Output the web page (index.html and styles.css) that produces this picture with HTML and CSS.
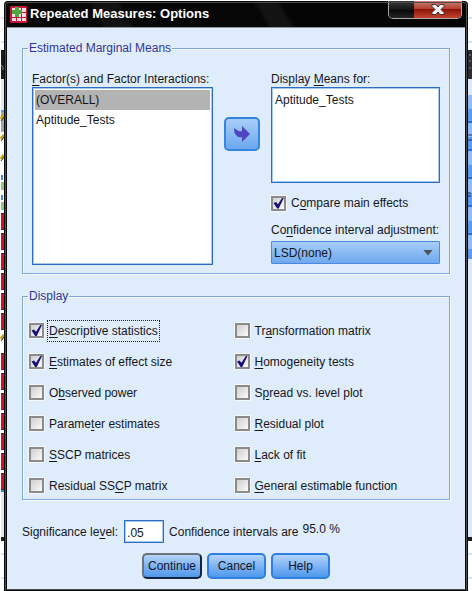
FILE: index.html
```
<!DOCTYPE html>
<html lang="en">
<head>
    <meta charset="UTF-8">
    <meta name="viewport" content="width=device-width, initial-scale=1.0">
    <title>Repeated Measures: Options</title>
    <link rel="stylesheet" href="styles.css">
</head>
<body>
    <!-- data editor showing behind the dialog, left edge -->
    <svg class="backdrop" width="4" height="591" aria-hidden="true">
        <defs>
            <pattern id="red-cells" width="4" height="20" patternUnits="userSpaceOnUse" y="12">
                <rect width="4" height="20" fill="#fff"/>
                <rect x="1" y="1" width="3" height="17" fill="#d0112b"/>
                <path d="M1 1.500h3M1 17.500h3" stroke="#4a2a30"/>
            </pattern>
        </defs>
        <rect width="4" height="591" fill="#fff"/>
        <path d="M1 18h3M1 42h3" stroke="#a9c8ea"/>
        <rect x="1" y="50" width="3" height="29" fill="#1c1c1c"/>
        <path d="M1 65l2 2v3" stroke="#888" fill="none"/>
        <rect x="1" y="79" width="3" height="31" fill="#dce9f8"/>
        <rect x="1" y="110" width="3" height="2" fill="#5b9be8"/>
        <rect x="1" y="112" width="3" height="20" fill="#a5a5a5"/>
        <path d="M1 119l3-4M1 139l3-4M1 159l3-4M1 339l3-4" stroke="#c9a400" stroke-width="3"/>
        <path d="M1 121l3-4M1 141l3-4M1 161l3-4M1 341l3-4" stroke="#3a3210"/>
        <rect x="1" y="175" width="2" height="5" fill="#4a86d8"/>
        <rect x="1" y="195" width="2" height="5" fill="#4a86d8"/>
        <rect x="1" y="182" width="3" height="8" fill="#8fca78"/>
        <rect x="1" y="202" width="3" height="8" fill="#8fca78"/>
        <rect y="212" width="4" height="120" fill="url(#red-cells)"/>
        <rect y="352" width="4" height="138" fill="url(#red-cells)"/>
        <rect x="1" y="490" width="3" height="2" fill="#3d7fe0"/>
        <rect x="1" y="492" width="3" height="45" fill="#dce9f8"/>
        <rect x="1" y="537" width="3" height="4" fill="#1c1c1c"/>
        <path d="M1 554h3M1 578h3" stroke="#a9c8ea"/>
    </svg>

    <main class="dialog">
        <header class="titlebar">
            <svg class="app-icon" width="17" height="17" viewBox="0 0 17 17" aria-hidden="true">
                <rect width="17" height="17" rx="1" fill="#c8143c"/>
                <path d="M2 2h4v4H2zM7 2h4v4H7zM12 2h4v4h-4zM2 7h4v4H2zM7 7h4v4H7zM12 7h4v4h-4zM2 12h4v3H2zM7 12h4v3H7zM12 12h4v3h-4z" fill="#f9dce0"/>
                <path d="M5 1h4v3h3v4H9v3H5V8H2V4h3z" fill="#4fa83d"/>
            </svg>
            <h1 class="title">Repeated Measures: Options</h1>
            <div class="window-buttons">
                <span class="window-blank"></span>
                <button class="close" type="button" aria-label="Close">
                    <svg width="14" height="11" viewBox="0 0 14 11">
                        <path d="M1 .5h4l2 2.500 2-2.500h4v2L10 5.500l3 3v2H9L7 8l-2 2.500H1v-2l3-3-3-3z" fill="#f2f2f2" stroke="#4b3030"/>
                    </svg>
                </button>
            </div>
        </header>

        <form class="content">
            <fieldset class="group">
                <legend>Estimated Marginal Means</legend>
                <div class="means">
                    <div class="factors">
                        <label for="factors"><u>F</u>actor(s) and Factor Interactions:</label>
                        <select class="list list-tall" id="factors" size="8">
                            <option class="current">(OVERALL)</option>
                            <option>Aptitude_Tests</option>
                        </select>
                    </div>

                    <button class="move" type="button" aria-label="Move to Display Means for">
                        <svg width="16" height="16" viewBox="0 0 16 16">
                            <path d="M0 2l3 2q2 2 5 1V0l8 8-8 8v-5q-4 1-6-2Q0 7 0 2z" fill="#5046c4"/>
                        </svg>
                    </button>

                    <div class="display-means">
                        <label for="means">Display <u>M</u>eans for:</label>
                        <select class="list list-short" id="means" size="4">
                            <option>Aptitude_Tests</option>
                        </select>
                        <label class="check compare"><input type="checkbox" checked><span>C<u>o</u>mpare main effects</span></label>
                        <label for="adjustment">Co<u>n</u>fidence interval adjustment:</label>
                        <div class="combo">
                            <select id="adjustment">
                                <option>LSD(none)</option>
                            </select>
                        </div>
                    </div>
                </div>
            </fieldset>

            <fieldset class="group">
                <legend>Display</legend>
                <div class="checks">
                    <label class="check focused"><input type="checkbox" checked><span><u>D</u>escriptive statistics</span></label>
                    <label class="check"><input type="checkbox"><span>Tr<u>a</u>nsformation matrix</span></label>
                    <label class="check"><input type="checkbox" checked><span><u>E</u>stimates of effect size</span></label>
                    <label class="check"><input type="checkbox" checked><span><u>H</u>omogeneity tests</span></label>
                    <label class="check"><input type="checkbox"><span>O<u>b</u>served power</span></label>
                    <label class="check"><input type="checkbox"><span>S<u>p</u>read vs. level plot</span></label>
                    <label class="check"><input type="checkbox"><span>Parame<u>t</u>er estimates</span></label>
                    <label class="check"><input type="checkbox"><span><u>R</u>esidual plot</span></label>
                    <label class="check"><input type="checkbox"><span><u>S</u>SCP matrices</span></label>
                    <label class="check"><input type="checkbox"><span><u>L</u>ack of fit</span></label>
                    <label class="check"><input type="checkbox"><span>Residual SS<u>C</u>P matrix</span></label>
                    <label class="check"><input type="checkbox"><span><u>G</u>eneral estimable function</span></label>
                </div>
            </fieldset>

            <div class="significance">
                <label for="level">Significance le<u>v</u>el:</label>
                <input class="level" id="level" type="text" value=".05">
                <span>Confidence intervals are</span>
                <output class="interval" for="level">95.0 %</output>
            </div>

            <div class="actions">
                <button class="default" type="button">Continue</button>
                <button type="button">Cancel</button>
                <button type="button">Help</button>
            </div>
        </form>
    </main>

    <!-- data editor showing behind the dialog, right edge -->
    <svg class="backdrop" width="4" height="591" aria-hidden="true">
        <defs>
            <pattern id="blue-cells" width="4" height="28" patternUnits="userSpaceOnUse" y="11">
                <rect width="4" height="28" fill="#8dbbf5"/>
                <rect y="14" width="4" height="12" fill="#5b9bec"/>
                <rect y="26" width="4" height="2" fill="#2b6cc8"/>
            </pattern>
        </defs>
        <rect width="4" height="591" fill="#fff"/>
        <path d="M0 18h4M0 42h4" stroke="#a9c8ea"/>
        <rect y="50" width="4" height="29" fill="#2c2c30"/>
        <path d="M1 55h2M1 61h2M1 68h2" stroke="#85858a"/>
        <rect y="79" width="4" height="458" fill="#dce9f8"/>
        <rect y="95" width="4" height="164" fill="url(#blue-cells)"/>
        <path d="M0 135h4M0 140h4M0 193h3M0 196h3" stroke="#17355e"/>
        <rect y="537" width="4" height="4" fill="#1c1c1c"/>
        <path d="M0 554h4M0 578h4" stroke="#a9c8ea"/>
    </svg>
</body>
</html>
```
FILE: styles.css
```
* {
    box-sizing: border-box;
}

body {
    margin: 0;
    display: flex;
    align-items: flex-start;
    background: #fff;
    color: #14171c;
    font-family: "Liberation Sans", Arial, sans-serif;
    font-size: 12px;
    line-height: 14px;
}

button,
input,
select {
    margin: 0;
    color: inherit;
    font: inherit;
}

u {
    text-underline-offset: 2px;
}

.backdrop {
    display: block;
    flex: none;
}

.dialog {
    flex: 1;
    min-width: 0;
    margin-top: 1px;
    border: 3px solid #0a0a0a;
    border-top: 0;
    border-bottom: 2px solid #0a0a0a;
    border-radius: 4px 4px 0 0;
    outline: 1px solid #4c4c4c;
    outline-offset: -2px;
    background: #dfecfc;
    padding: 0 1px;
}

/* title bar */
.titlebar {
    display: flex;
    align-items: center;
    height: 27px;
    margin: 0 -1px;
    padding-left: 3px;
    padding-right: 3px;
    border-bottom: 1px solid #8f959c;
    background: linear-gradient(60deg, #070707 0 20%, #121212 21% 26%, #060606 27% 55%, #131313 56% 60%, #050505 61%);
}

.title {
    flex: 1;
    margin: 0 0 0 3px;
    color: #fff;
    font-size: 13px;
    line-height: 16px;
}

.window-buttons {
    display: flex;
    align-self: flex-start;
    height: 18px;
    border: 1px solid #a9a9a9;
    border-top: 0;
    border-radius: 0 0 5px 5px;
    overflow: hidden;
}

.window-blank {
    width: 25px;
    background: linear-gradient(#3b3b3b, #151515 50%, #050505 51%, #262626);
}

.close {
    display: flex;
    align-items: center;
    justify-content: center;
    width: 47px;
    padding: 0;
    border: 0;
    background: linear-gradient(#c98078, #b5402f 45%, #8c1509 50%, #c4452e);
}

/* groups */
.content {
    padding: 13px 14px 10px;
}

.group {
    min-width: 0;
    margin: 0 0 15px;
    padding: 0 9px 8px;
    border: 1px solid #7fa9d9;
    box-shadow: inset 1px 1px #f6faff, 1px 1px #f6faff;
}

.group legend {
    margin-left: -4px;
    padding: 0 1px;
    color: #31359a;
}

.means {
    display: flex;
    align-items: flex-start;
    justify-content: space-between;
    padding-top: 17px;
}

.means label {
    display: block;
}

.factors {
    width: 181px;
}

.display-means {
    width: 169px;
}

.list {
    display: block;
    width: 100%;
    margin-top: 1px;
    padding: 2px;
    border: 1px solid #2f6cc4;
    border-radius: 0;
    outline: 1px solid #a6c8f0;
    outline-offset: -2px;
    background: #fff;
    overflow: hidden;
}

.list option {
    min-height: 20px;
    padding: 3px 1px;
}

.list .current {
    background: #b3b3b3;
}

.list-tall {
    height: 178px;
}

.list-short {
    height: 96px;
}

.move {
    display: flex;
    align-items: center;
    justify-content: center;
    width: 36px;
    height: 34px;
    margin-top: 45px;
    padding: 0;
    border: 2px solid #3485e0;
    border-radius: 5px;
    background: linear-gradient(#a8cdf9, #6ba8ee);
}

/* check boxes */
.means .check,
.check {
    display: flex;
    align-items: center;
}

.check input {
    appearance: none;
    flex: none;
    width: 15px;
    height: 15px;
    border: 2px solid #8b8b8b;
    outline: 1px solid #f4f7fb;
    background: linear-gradient(135deg, #cfcfcf, #fafafa);
    background-clip: padding-box;
}

.check input:checked::after {
    content: "";
    display: block;
    width: 11px;
    height: 11px;
    background: #17107c;
    clip-path: polygon(5% 50%, 28% 40%, 45% 62%, 85% 0, 100% 0, 52% 100%, 38% 100%);
}

.check span {
    margin-left: 3px;
    padding: 3px 1px;
    border: 1px solid transparent;
}

.focused span {
    border: 1px dotted #222;
}

.means .compare {
    margin: 9px 0;
}

.checks {
    display: grid;
    grid-template-columns: 50% 50%;
    grid-auto-rows: 31px;
    align-items: center;
    padding-top: 12px;
    margin: 0 0 -10px -3px;
}

/* combo box */
.combo {
    display: grid;
    align-items: center;
    margin-top: 4px;
}

.combo select {
    grid-area: 1 / 1;
    appearance: none;
    height: 23px;
    padding: 0 20px 0 2px;
    border: 1px solid #4a8ade;
    border-radius: 1px;
    background: linear-gradient(#a9cdf8, #84b7f2 60%, #6fa9ed);
}

.combo::after {
    content: "";
    grid-area: 1 / 1;
    justify-self: end;
    width: 10px;
    height: 6px;
    margin-right: 7px;
    background: #4d535c;
    clip-path: polygon(0 0, 100% 0, 50% 100%);
    pointer-events: none;
}

/* bottom rows */
.significance {
    display: flex;
    align-items: center;
    margin-top: 20px;
}

.level {
    width: 40px;
    height: 23px;
    margin: 0 5px 0 6px;
    padding: 2px 2px 0;
    border: 1px solid #2f6cc4;
    outline: 1px solid #a6c8f0;
    outline-offset: -2px;
    background: #fff;
}

.interval {
    margin-left: 4px;
    padding-bottom: 6px;
}

.actions {
    display: flex;
    justify-content: center;
    gap: 5px;
    margin-top: 10px;
}

.actions button {
    min-width: 59px;
    height: 26px;
    padding: 0 4px;
    border: 2px solid #2f7fe0;
    border-radius: 5px;
    background: linear-gradient(#b4d3fa, #7fb3f3 50%, #4f98ec);
}

.actions .default {
    border-color: #6e7378 #14243c #14243c #6e7378;
}
```
